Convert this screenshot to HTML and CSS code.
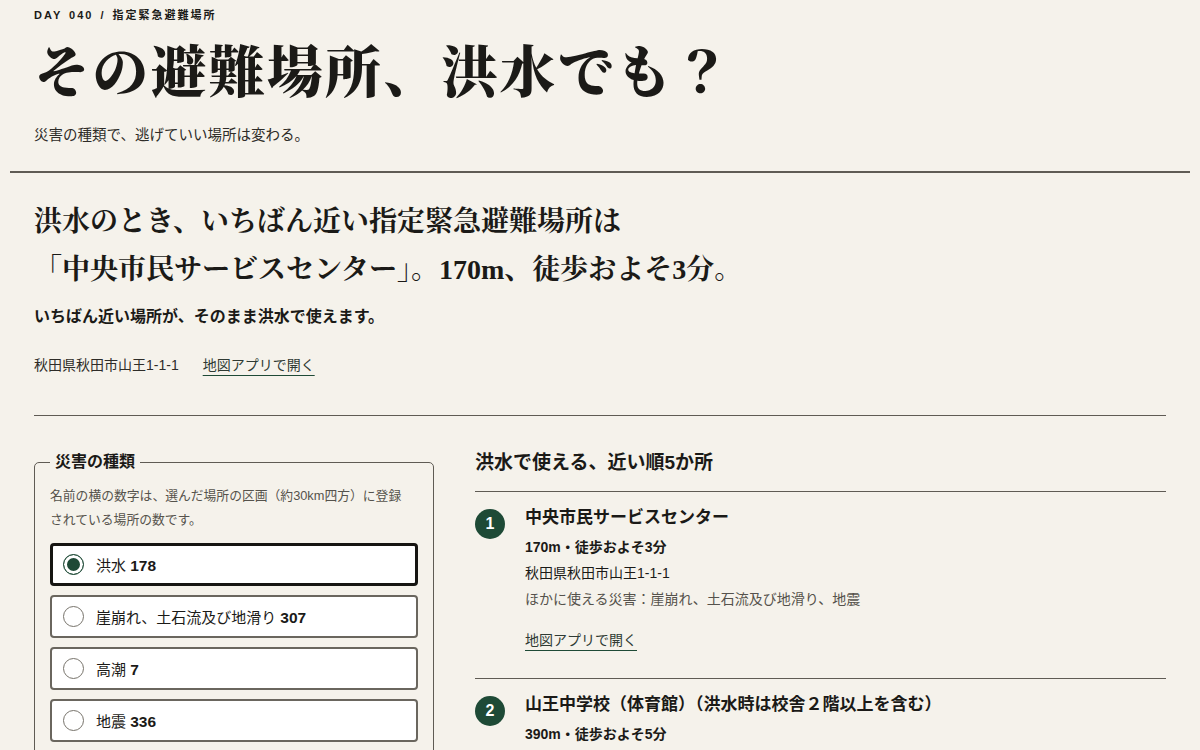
FILE: index.html
```html
<!DOCTYPE html>
<html lang="ja">
<head>
<meta charset="utf-8">
<title>その避難場所、洪水でも？</title>
<link rel="stylesheet" href="styles.css">
</head>
<body>
<div class="page">
  <header class="masthead">
    <p class="kicker">DAY 040 / 指定緊急避難場所</p>
    <h1 class="title">その避難場所、洪水でも？</h1>
    <p class="lede">災害の種類で、逃げていい場所は変わる。</p>
  </header>

  <main class="content">
    <section class="answer">
      <h2 class="answer-head">洪水のとき、いちばん近い指定緊急避難場所は<br>「中央市民サービスセンター」。170m、徒歩およそ3分。</h2>
      <p class="answer-note">いちばん近い場所が、そのまま洪水で使えます。</p>
      <p class="answer-addr">秋田県秋田市山王1-1-1<a class="maplink" href="#">地図アプリで開く</a></p>
    </section>

    <div class="columns">
      <form class="filter">
        <fieldset class="hazards">
          <legend>災害の種類</legend>
          <p class="hint">名前の横の数字は、選んだ場所の区画（約30km四方）に登録されている場所の数です。</p>
          <div class="options">
            <label class="option is-checked"><span class="radio"></span><span>洪水 <b>178</b></span></label>
            <label class="option"><span class="radio"></span><span>崖崩れ、土石流及び地滑り <b>307</b></span></label>
            <label class="option"><span class="radio"></span><span>高潮 <b>7</b></span></label>
            <label class="option"><span class="radio"></span><span>地震 <b>336</b></span></label>
            <label class="option"><span class="radio"></span><span>津波 <b>52</b></span></label>
          </div>
        </fieldset>
      </form>

      <section class="results">
        <h3 class="results-head">洪水で使える、近い順5か所</h3>
        <ol class="places">
          <li class="place">
            <span class="rank">1</span>
            <div class="place-body">
              <p class="place-name">中央市民サービスセンター</p>
              <p class="place-dist">170m・徒歩およそ3分</p>
              <p class="place-addr">秋田県秋田市山王1-1-1</p>
              <p class="place-other">ほかに使える災害：崖崩れ、土石流及び地滑り、地震</p>
              <a class="maplink place-link" href="#">地図アプリで開く</a>
            </div>
          </li>
          <li class="place">
            <span class="rank">2</span>
            <div class="place-body">
              <p class="place-name">山王中学校（体育館）（洪水時は校舎２階以上を含む）</p>
              <p class="place-dist">390m・徒歩およそ5分</p>
              <p class="place-addr">秋田県秋田市山王2-1-1</p>
            </div>
          </li>
        </ol>
      </section>
    </div>
  </main>
</div>
</body>
</html>
```

FILE: styles.css
```css
* { box-sizing: border-box; }

html, body {
  margin: 0;
  background: #f5f2eb;
  color: #1b1a17;
  font-family: "Liberation Sans", "Noto Sans CJK JP", sans-serif;
}

p, h1, h2, h3, ol { margin: 0; padding: 0; }

.page { padding: 0 10px; }

/* masthead */
.masthead {
  padding: 6px 24px 25px;
  border-bottom: 2px solid #5f5b54;
}

.kicker {
  font-size: 11px;
  line-height: 18px;
  font-weight: 700;
  letter-spacing: 2px;
  word-spacing: 2px;
}

.title {
  margin-top: 15px;
  font-family: "Liberation Serif", "Noto Serif CJK JP", "Noto Sans CJK JP", serif;
  font-size: 56px;
  line-height: 68px;
  font-weight: 900;
  letter-spacing: 2.2px;
}

.lede {
  margin-top: 17px;
  font-size: 14.5px;
  line-height: 22px;
  color: #2e2c28;
}

/* main */
.content { padding: 0 24px; }

.answer {
  padding: 25px 0 39px;
  border-bottom: 1px solid #5f5b54;
}

.answer-head {
  font-family: "Liberation Serif", "Noto Serif CJK JP", "Noto Sans CJK JP", serif;
  font-size: 28px;
  line-height: 48px;
  font-weight: 700;
}

.answer-note {
  margin-top: 11px;
  font-size: 16px;
  line-height: 24px;
  font-weight: 700;
}

.answer-addr {
  margin-top: 25px;
  font-size: 14px;
  line-height: 22px;
  color: #2e2c28;
}

.maplink {
  color: #2f3a33;
  text-decoration: underline;
  text-decoration-color: #1e4a36;
  text-underline-offset: 5px;
  text-decoration-thickness: 1px;
}

.answer-addr .maplink { margin-left: 24px; }

.columns {
  display: grid;
  grid-template-columns: 400px 1fr;
  column-gap: 41px;
  padding-top: 34px;
}

/* hazard filter */
.filter { margin: 0; }

.hazards {
  margin: 0;
  padding: 10px 15px 15px;
  border: 1px solid #5f5b54;
  border-radius: 5px;
  min-width: 0;
}

.hazards legend {
  padding: 0 5px;
  font-size: 16px;
  line-height: 24px;
  font-weight: 700;
}

.hint {
  max-width: 362px;
  font-size: 12.8px;
  line-height: 24px;
  color: #55524c;
}

.options {
  display: flex;
  flex-direction: column;
  gap: 9px;
  margin-top: 11px;
}

.option {
  display: flex;
  align-items: center;
  gap: 12px;
  height: 43px;
  padding: 0 11px;
  background: #fff;
  border: 2px solid #6a665e;
  border-radius: 4px;
  font-size: 15px;
  color: #1b1a17;
}

.option b { font-weight: 700; font-size: 15.5px; }

.option.is-checked {
  border: 3px solid #161512;
  padding: 0 10px;
}

.radio {
  width: 21px;
  height: 21px;
  flex: none;
  border-radius: 50%;
  border: 1px solid #77736b;
  background: #fff;
}

.is-checked .radio {
  border-color: #1e4a36;
  background: #1e4a36;
  box-shadow: inset 0 0 0 3px #fff;
}

/* results list */
.results-head {
  padding-bottom: 15px;
  border-bottom: 1px solid #5f5b54;
  font-size: 19px;
  line-height: 26px;
  font-weight: 700;
}

.places { list-style: none; }

.place {
  display: flex;
  gap: 20px;
  padding: 13px 0 25px;
  border-bottom: 1px solid #5f5b54;
}

.rank {
  flex: none;
  width: 30px;
  height: 30px;
  margin-top: 4px;
  border-radius: 50%;
  background: #1e4a36;
  color: #fff;
  font-family: "Liberation Sans", sans-serif;
  font-size: 16px;
  font-weight: 700;
  line-height: 30px;
  text-align: center;
}

.place-body { font-size: 14px; line-height: 26px; }

.place-name {
  font-size: 17px;
  font-weight: 700;
  line-height: 26px;
}

.place-dist { margin-top: 3px; font-weight: 700; }

.place-other { color: #55524c; }

.place-link {
  display: inline-block;
  margin-top: 15px;
  line-height: 26px;
}
```
